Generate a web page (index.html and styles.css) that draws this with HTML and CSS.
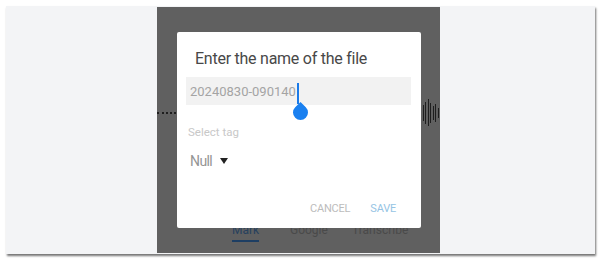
FILE: index.html
```html
<!DOCTYPE html>
<html>
<head>
<meta charset="utf-8">
<link rel="stylesheet" href="styles.css">
</head>
<body>
<div class="frame">
  <div class="screen">
    <div class="wave-row">
      <div class="dots"></div>
      <div class="bars">
        <span style="height:10px"></span>
        <span style="height:16px"></span>
        <span style="height:22px"></span>
        <span style="height:27px"></span>
        <span style="height:20px"></span>
        <span style="height:14px"></span>
        <span style="height:18px"></span>
        <span style="height:10px"></span>
      </div>
    </div>
    <div class="tabs">
      <div class="tab active">Mark</div>
      <div class="tab">Google</div>
      <div class="tab">Transcribe</div>
    </div>
    <div class="dialog">
      <div class="title">Enter the name of the file</div>
      <div class="input">
        <span class="value">20240830-090140</span><span class="caret"></span>
        <span class="handle"></span>
      </div>
      <div class="label">Select tag</div>
      <div class="select">Null <span class="tri"></span></div>
      <div class="actions">
        <span class="btn cancel">CANCEL</span>
        <span class="btn save">SAVE</span>
      </div>
    </div>
  </div>
</div>
</body>
</html>
```
FILE: styles.css
```css
* { box-sizing: border-box; }
html, body { margin: 0; padding: 0; background: #ffffff; }
body { font-family: Roboto, "Liberation Sans", sans-serif; width: 600px; height: 261px; overflow: hidden; }

.frame {
  margin: 6px 5px 0 6px;
  height: 248px;
  background: #f3f4f6;
  box-shadow: 1px 2px 2px rgba(0,0,0,0.55);
  padding: 1px 0 0 151px;
}

.screen {
  position: relative;
  width: 283px;
  height: 246px;
  background: #606060;
  display: flex;
  flex-direction: column;
}

.wave-row {
  margin-top: 92px;
  height: 27px;
  display: flex;
  align-items: center;
}
.dots {
  flex: 1;
  height: 0;
  border-top: 2px dotted #1e1e1e;
}
.bars {
  width: 19px;
  margin-right: 1px;
  display: flex;
  align-items: center;
  justify-content: space-between;
}
.bars span {
  width: 1px;
  background: #1e1e1e;
}

.tabs {
  margin-top: auto;
  margin-bottom: 11px;
  display: grid;
  grid-template-columns: 58px 62px auto;
  padding-left: 75px;
  font-size: 12px;
  color: #4a4a4a;
}
.tab { justify-self: start; padding-bottom: 3px; line-height: 13px; }
.tab.active { color: #27415e; border-bottom: 2px solid #1d3e63; }

.dialog {
  position: absolute;
  left: 20px;
  top: 25px;
  width: 244px;
  height: 196px;
  background: #ffffff;
  border-radius: 2px;
  padding: 17px 10px 0 9px;
  display: flex;
  flex-direction: column;
}

.title {
  font-size: 16px;
  line-height: 20px;
  color: #484848;
  padding-left: 9px;
  letter-spacing: -0.25px;
}

.input {
  position: relative;
  margin-top: 8px;
  height: 28px;
  background: #f2f2f2;
  display: flex;
  align-items: center;
  padding-left: 4px;
}
.value {
  font-size: 13px;
  color: #a4a4a4;
}
.caret {
  width: 2px;
  height: 21px;
  background: #1a7ae8;
  margin-left: 1px;
  margin-top: 4px;
}
.handle {
  position: absolute;
  left: 107px;
  top: 28px;
  width: 15px;
  height: 15px;
  background: #1a80f0;
  border-radius: 0 50% 50% 50%;
  transform: rotate(45deg);
}

.label {
  margin-top: 20px;
  padding-left: 2px;
  font-size: 11.5px;
  color: #c8c8c8;
  line-height: 14px;
}

.select {
  margin-top: 14px;
  padding-left: 4px;
  font-size: 14px;
  color: #959595;
  letter-spacing: -0.6px;
  line-height: 16px;
  display: flex;
  align-items: center;
}
.tri {
  margin-left: 8px;
  width: 0;
  height: 0;
  border-left: 4px solid transparent;
  border-right: 4px solid transparent;
  border-top: 6px solid #222;
}

.actions {
  margin-top: 33px;
  display: flex;
  justify-content: flex-end;
  gap: 20px;
  padding-right: 15px;
  font-size: 11px;
  letter-spacing: -0.2px;
}
.cancel { color: #bcbcbc; }
.save { color: #96c4e4; }
```
